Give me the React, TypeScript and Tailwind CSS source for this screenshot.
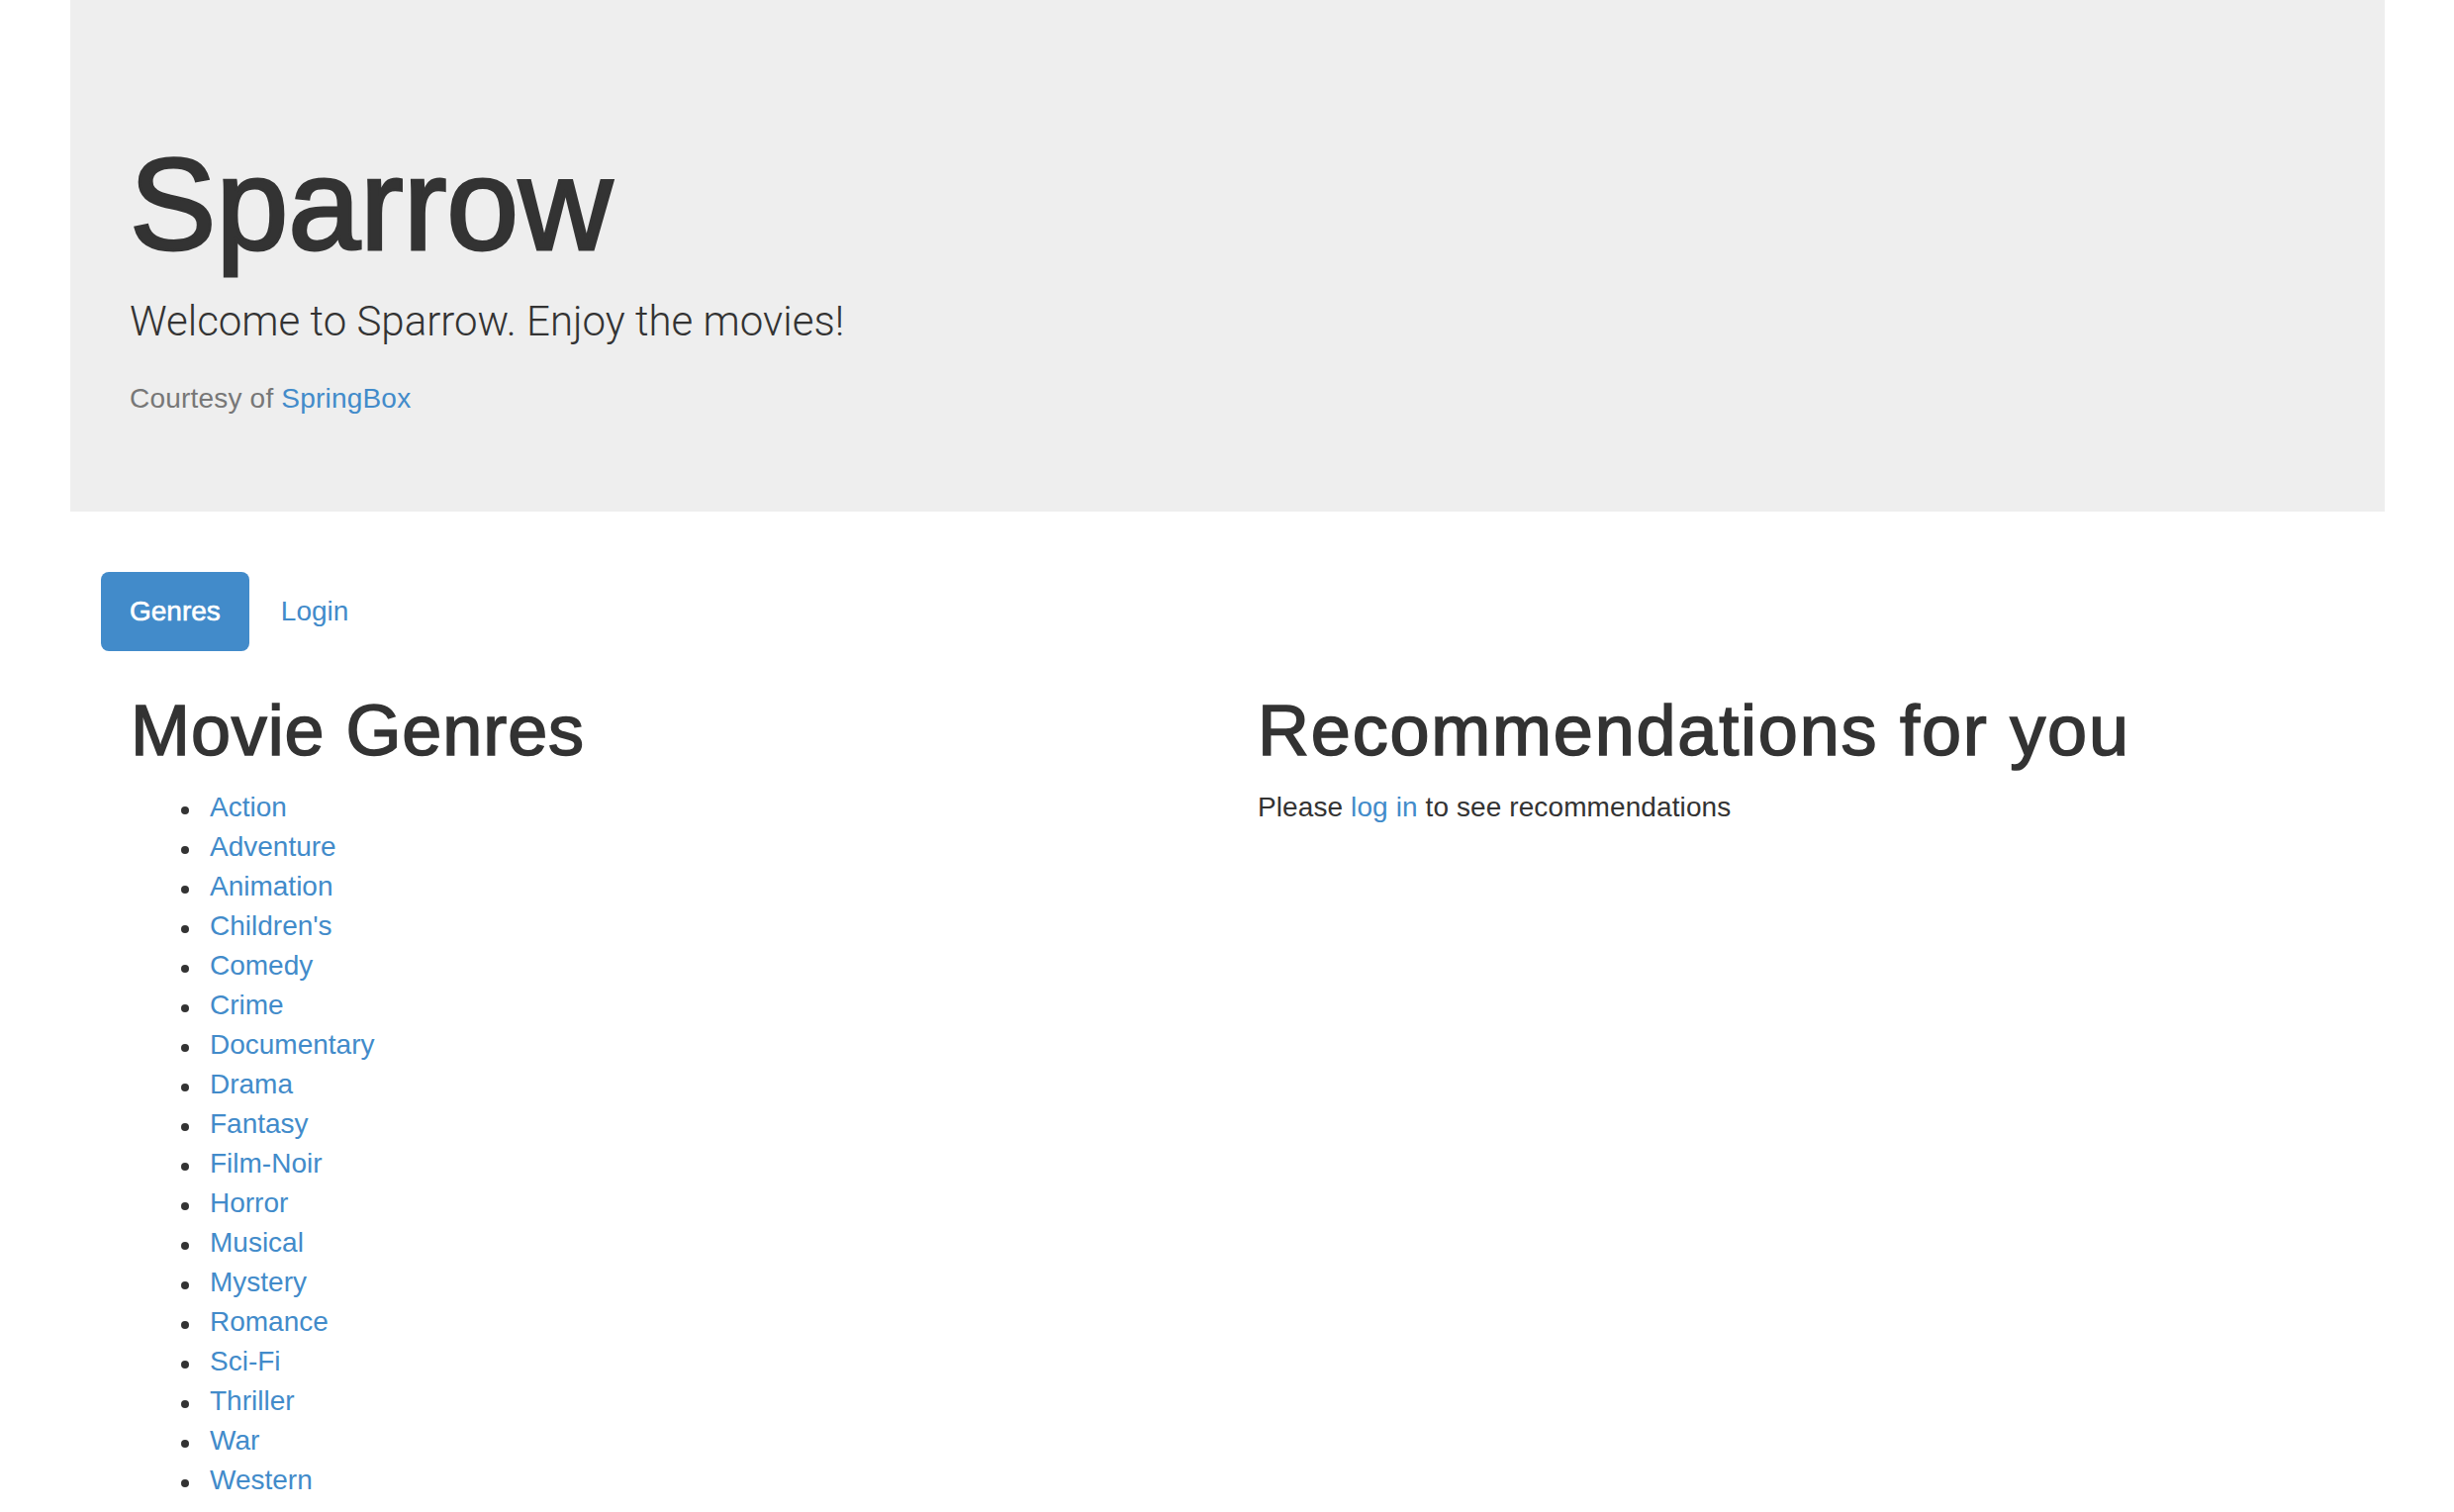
import React from 'react';

const genres = [
  'Action',
  'Adventure',
  'Animation',
  "Children's",
  'Comedy',
  'Crime',
  'Documentary',
  'Drama',
  'Fantasy',
  'Film-Noir',
  'Horror',
  'Musical',
  'Mystery',
  'Romance',
  'Sci-Fi',
  'Thriller',
  'War',
  'Western',
];

export default function App() {
  return (
    <div className="min-h-screen bg-white text-[#333] font-['Liberation_Sans',Arial,sans-serif]">
      <div className="ml-[71px] w-[2339px]">
        {/* jumbotron */}
        <div className="bg-[#eee] px-[60px] pt-[134px] pb-[94px]">
          <h1 className="m-0 text-[131px] leading-[145px] font-normal [-webkit-text-stroke:3px_#333]">Sparrow</h1>
          <p className="mt-[16px] font-['Roboto',sans-serif] text-[42px] leading-[60px] font-light">
            Welcome to Sparrow. Enjoy the movies!
          </p>
          <p className="mt-[28px] text-[28px] leading-[40px] tracking-[0.2px] text-[#777]">
            Courtesy of <a href="#" className="text-[#428bca]">SpringBox</a>
          </p>
        </div>

        <div className="px-[31px] pt-[61px]">
          <ul className="flex gap-[4px]">
            <li>
              <a href="#" className="block rounded-[8px] bg-[#428bca] px-[29px] py-[20px] text-[28px] leading-[40px] text-white [-webkit-text-stroke:0.6px_#fff]">
                Genres
              </a>
            </li>
            <li>
              <a href="#" className="block px-[28px] py-[20px] text-[28px] leading-[40px] text-[#428bca]">
                Login
              </a>
            </li>
          </ul>
        </div>

        <div className="flex pl-[61px] pt-[41px]">
          <div className="w-[1139px]">
            <h2 className="m-0 text-[72px] leading-[79px] font-normal tracking-[0.9px] [-webkit-text-stroke:1.6px_#333]">Movie Genres</h2>
            <ul className="mt-[18px] pl-[51px] text-[28px] leading-[40px]">
              {genres.map((g) => (
                <li key={g} className="flex">
                  <span className="mt-[19px] mr-[21px] h-[8px] w-[8px] shrink-0 rounded-full bg-[#333]" />
                  <a href="#" className="text-[#428bca]">{g}</a>
                </li>
              ))}
            </ul>
          </div>
          <div className="flex-1">
            <h2 className="m-0 text-[72px] leading-[79px] font-normal tracking-[1.8px] [-webkit-text-stroke:1.6px_#333]">Recommendations for you</h2>
            <p className="mt-[18px] text-[28px] leading-[40px] tracking-[0.1px]">
              Please <a href="#" className="text-[#428bca]">log in</a> to see recommendations
            </p>
          </div>
        </div>
      </div>
    </div>
  );
}
